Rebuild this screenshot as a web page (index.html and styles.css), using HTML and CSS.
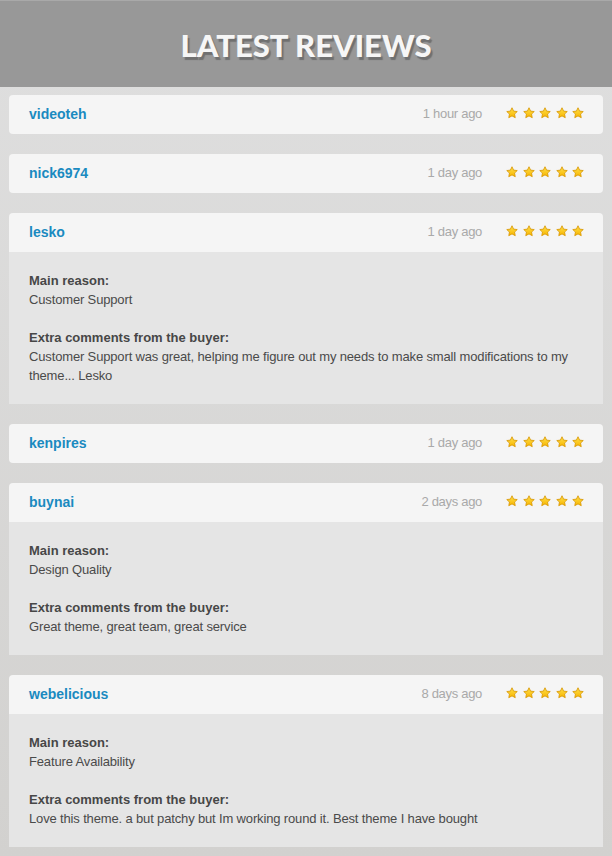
FILE: index.html
```html
<!DOCTYPE html>
<html lang="en">
<head>
    <meta charset="UTF-8">
    <meta name="viewport" content="width=device-width, initial-scale=1.0">
    <title>Latest Reviews</title>
    <link rel="stylesheet" href="styles.css">
</head>
<body>
    <div class="header">
        <h1>Latest Reviews</h1>
    </div>

    <div class="reviews">
        <!-- Collapsed reviews -->
        <div class="review">
            <div class="review-head">
                <span class="user">videoteh</span>
                <span class="time">1 hour ago</span>
                <span class="stars"><i></i><i></i><i></i><i></i><i></i></span>
            </div>
        </div>

        <div class="review">
            <div class="review-head">
                <span class="user">nick6974</span>
                <span class="time">1 day ago</span>
                <span class="stars"><i></i><i></i><i></i><i></i><i></i></span>
            </div>
        </div>

        <div class="review open">
            <div class="review-head">
                <span class="user">lesko</span>
                <span class="time">1 day ago</span>
                <span class="stars"><i></i><i></i><i></i><i></i><i></i></span>
            </div>
            <div class="review-body">
                <h3>Main reason:</h3>
                <p>Customer Support</p>
                <h3>Extra comments from the buyer:</h3>
                <p>Customer Support was great, helping me figure out my needs to make small modifications to my theme... Lesko</p>
            </div>
        </div>

        <div class="review">
            <div class="review-head">
                <span class="user">kenpires</span>
                <span class="time">1 day ago</span>
                <span class="stars"><i></i><i></i><i></i><i></i><i></i></span>
            </div>
        </div>

        <div class="review open">
            <div class="review-head">
                <span class="user">buynai</span>
                <span class="time">2 days ago</span>
                <span class="stars"><i></i><i></i><i></i><i></i><i></i></span>
            </div>
            <div class="review-body">
                <h3>Main reason:</h3>
                <p>Design Quality</p>
                <h3>Extra comments from the buyer:</h3>
                <p>Great theme, great team, great service</p>
            </div>
        </div>

        <div class="review open">
            <div class="review-head">
                <span class="user">webelicious</span>
                <span class="time">8 days ago</span>
                <span class="stars"><i></i><i></i><i></i><i></i><i></i></span>
            </div>
            <div class="review-body">
                <h3>Main reason:</h3>
                <p>Feature Availability</p>
                <h3>Extra comments from the buyer:</h3>
                <p>Love this theme. a but patchy but Im working round it. Best theme I have bought</p>
            </div>
        </div>
    </div>
</body>
</html>
```

FILE: styles.css
```css
* {
    box-sizing: border-box;
    margin: 0;
    padding: 0;
}

body {
    font-family: 'Liberation Sans', Arial, sans-serif;
    background: linear-gradient(180deg, #dfdfdf, #d2d1cf);
    min-height: 100vh;
}

.header {
    background-color: #989898;
    border-top: 1px solid #a9a9a9;
    height: 87px;
    display: flex;
    justify-content: center;
    align-items: center;
}

.header h1 {
    font-family: 'Lato', 'Open Sans', sans-serif;
    font-weight: 900;
    font-size: 31px;
    text-transform: uppercase;
    color: #f6f6f6;
    text-shadow: 2px 3px 1px #707070;
    padding-top: 1px;
}

.reviews {
    padding: 8px 9px 10px;
    display: flex;
    flex-direction: column;
    gap: 20px;
}

.review-head {
    background-color: #f5f5f5;
    border-radius: 4px;
    height: 39px;
    padding: 0 19px 2px 20px;
    display: flex;
    align-items: center;
}

.review.open .review-head {
    border-radius: 4px 4px 0 0;
}

.user {
    color: #1a8ac0;
    font-weight: bold;
    font-size: 14px;
    flex: 1;
}

.time {
    color: #a9a9a9;
    font-size: 13px;
    letter-spacing: -0.3px;
    margin-right: 24px;
}

.stars {
    display: flex;
    gap: 4.5px;
    margin-top: -1px;
}

/* star drawn as svg background */
.stars i {
    display: block;
    width: 12px;
    height: 12px;
    background: url("data:image/svg+xml,%3Csvg xmlns='http://www.w3.org/2000/svg' viewBox='0 0 24 24'%3E%3Cdefs%3E%3ClinearGradient id='g' x1='0' y1='0' x2='0' y2='1'%3E%3Cstop offset='0' stop-color='%23ffe04a'/%3E%3Cstop offset='1' stop-color='%23f7b500'/%3E%3C/linearGradient%3E%3C/defs%3E%3Cpath d='M12 1.5l3.2 6.7 7.3.9-5.4 5 1.4 7.3L12 17.8l-6.5 3.6 1.4-7.3-5.4-5 7.3-.9z' fill='url(%23g)' stroke='%23d79500' stroke-width='1.6' stroke-linejoin='round'/%3E%3C/svg%3E") no-repeat center / contain;
}

.review-body {
    background-color: #e5e5e5;
    padding: 19px 20px 19px;
    color: #4a4a4a;
    font-size: 13px;
    line-height: 19px;
}

.review-body h3 {
    font-size: 13px;
    font-weight: bold;
    color: #474747;
}

.review-body p {
    letter-spacing: -0.15px;
    margin-bottom: 19px;
}

.review-body p:last-child {
    margin-bottom: 0;
}
```
